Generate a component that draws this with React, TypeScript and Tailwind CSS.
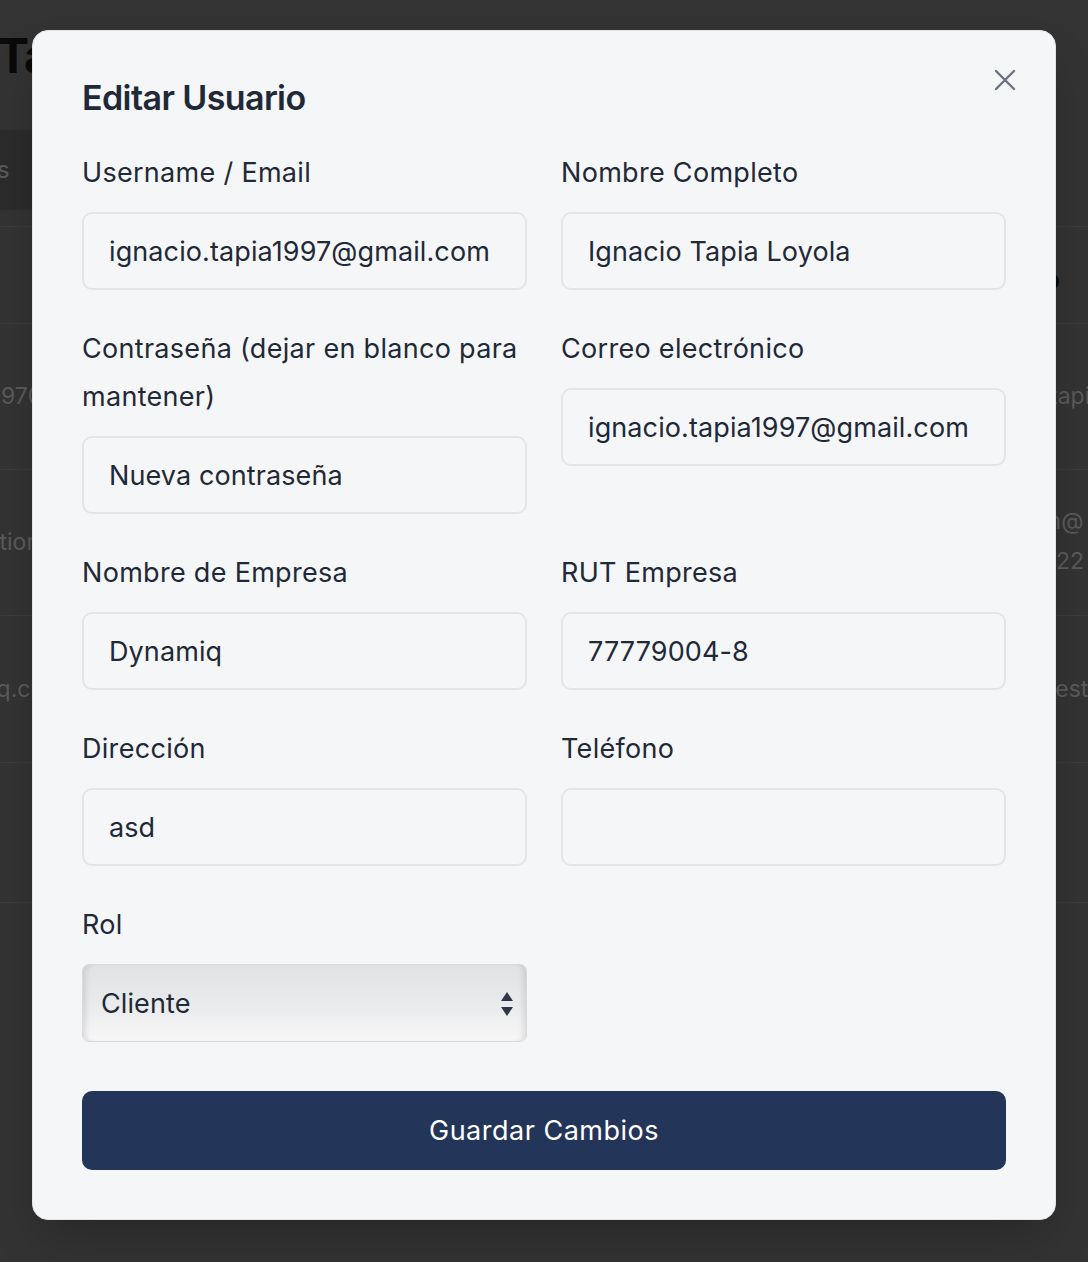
import React from "react";

const font = { fontFamily: "Inter, 'Noto Sans', sans-serif" };

function Field({ label, value, placeholder }: { label: string; value?: string; placeholder?: string }) {
  return (
    <div className="flex flex-col">
      <label className="text-[27px] leading-[48px] tracking-[0.3px] text-[#1f2937]">{label}</label>
      <div className="mt-[15px] h-[78px] rounded-[10px] border-2 border-[#e3e5e8] bg-[#f5f6f8] pl-[25px] pt-[2px] flex items-center text-[27px] tracking-[0.1px] text-[#1f2937] whitespace-nowrap overflow-hidden">
        {value ?? placeholder ?? ""}
      </div>
    </div>
  );
}

export default function App() {
  return (
    <div className="relative w-[1088px] h-[1262px] overflow-hidden bg-[#333333]" style={font}>
      {/* page behind the overlay */}
      <div className="flex flex-col pt-[24px]">
        <div className="h-[64px] -ml-[3px] text-[48px] font-bold leading-[64px] tracking-[-1.5px] text-[#0a0a0a] whitespace-nowrap">Tabla de Usuarios</div>
        <div className="mt-[42px] h-[80px] w-[1000px] bg-[#2b2b2b] flex items-center text-[24px] text-[#5a5a5a] whitespace-nowrap">
          <span className="-ml-[3px]">s</span>
        </div>
        <div className="h-[16px]" />
        <div className="flex flex-col border-t border-[#3b3b3b]">
          <div className="h-[97px] flex items-center justify-end border-b border-[#3b3b3b]">
            <span className="mr-[28px] mt-[8px] text-[26px] font-bold text-[#0a0a0a]">o</span>
          </div>
          <div className="h-[146px] flex items-center justify-between border-b border-[#3b3b3b] text-[23px] text-[#5a5a5a] whitespace-nowrap">
            <div className="w-[50px] flex justify-end"><span>tapia1997@</span></div>
            <span className="w-[38px] overflow-hidden">tapia</span>
          </div>
          <div className="h-[146px] flex items-center justify-between border-b border-[#3b3b3b] text-[23px] text-[#5a5a5a] whitespace-nowrap">
            <div className="w-[40px] flex justify-end"><span>Gestion</span></div>
            <div className="w-[42px] overflow-hidden flex flex-col leading-[40px] -mt-[4px]">
              <span className="-ml-[4px]">in@</span>
              <span className="-ml-[4px]">222</span>
            </div>
          </div>
          <div className="h-[147px] flex items-center justify-between border-b border-[#3b3b3b] text-[23px] text-[#5a5a5a] whitespace-nowrap">
            <div className="w-[36px] flex justify-end"><span>dynamiq.cl</span></div>
            <span className="w-[40px] overflow-hidden">test</span>
          </div>
          <div className="h-[140px] border-b border-[#3b3b3b]" />
        </div>
      </div>

      {/* modal */}
      <div className="absolute left-[32px] top-[30px] w-[1024px] rounded-[16px] border border-[#e2e4e8] bg-[#f5f6f8] p-[49px] shadow-2xl">
        <button className="absolute right-[39px] top-[38px] w-[22px] h-[22px] flex items-center justify-center">
          <svg width="22" height="22" viewBox="0 0 22 22" fill="none" stroke="#6b7280" strokeWidth="2.4" strokeLinecap="round">
            <path d="M2 2L20 20M20 2L2 20" />
          </svg>
        </button>
        <h2 className="text-[34px] font-semibold leading-[36px] tracking-[-0.6px] text-[#1f2937]">Editar Usuario</h2>
        <div className="mt-[33px] grid grid-cols-2 gap-x-[34px] gap-y-[35px] items-start">
          <Field label="Username / Email" value="ignacio.tapia1997@gmail.com" />
          <Field label="Nombre Completo" value="Ignacio Tapia Loyola" />
          <Field label="Contraseña (dejar en blanco para mantener)" placeholder="Nueva contraseña" />
          <Field label="Correo electrónico" value="ignacio.tapia1997@gmail.com" />
          <Field label="Nombre de Empresa" value="Dynamiq" />
          <Field label="RUT Empresa" value="77779004-8" />
          <Field label="Dirección" value="asd" />
          <Field label="Teléfono" value="" />
          <div className="flex flex-col">
            <label className="text-[27px] leading-[48px] tracking-[0.3px] text-[#1f2937]">Rol</label>
            <div className="mt-[15px] h-[78px] rounded-[7px] border border-[#d9dadd] bg-gradient-to-b from-[#e1e2e4] via-[#e9eaeb] to-[#f7f7f8] shadow-[inset_6px_0_6px_-4px_rgba(0,0,0,0.12),inset_-6px_0_6px_-4px_rgba(0,0,0,0.12)] pl-[18px] pr-[12px] pt-[2px] flex items-center justify-between text-[27px] tracking-[0.1px] text-[#1f2937]">
              <span>Cliente</span>
              <svg width="14" height="26" viewBox="0 0 14 26" fill="#2d3748">
                <path d="M7 1L13 10H1Z" />
                <path d="M7 25L13 16H1Z" />
              </svg>
            </div>
          </div>
        </div>
        <button className="mt-[49px] w-full h-[79px] rounded-[10px] bg-[#233558] pt-[2px] text-white text-[27px] tracking-[0.5px] flex items-center justify-center">
          Guardar Cambios
        </button>
      </div>
    </div>
  );
}
